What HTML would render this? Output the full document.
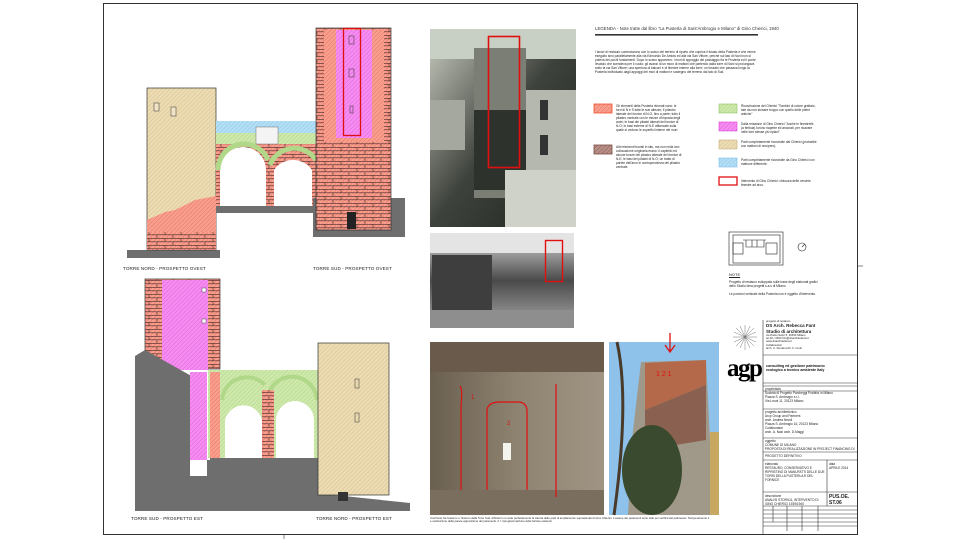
<!DOCTYPE html>
<html><head><meta charset="utf-8"><style>
body{margin:0;width:960px;height:539px;background:#fff;position:relative;overflow:hidden;font-family:"Liberation Sans",sans-serif}
.a{position:absolute}
.t{position:absolute;font-size:3.2px;line-height:4px;color:#222;overflow:hidden}
.lab{position:absolute;font-size:4.6px;color:#222;letter-spacing:.1px}
</style></head><body>
<svg class="a" style="left:0;top:0" width="960" height="539">
<defs>
<pattern id="po" width="3" height="3" patternUnits="userSpaceOnUse" patternTransform="rotate(45)"><rect width="3" height="3" fill="#f7a090"/><line x1="0" y1="0" x2="0" y2="3" stroke="#ee6e5a" stroke-width="1"/></pattern>
<pattern id="pt" width="3" height="3" patternUnits="userSpaceOnUse" patternTransform="rotate(45)"><rect width="3" height="3" fill="#ecdcb4"/><line x1="0" y1="0" x2="0" y2="3" stroke="#d8c08c" stroke-width="1"/></pattern>
<pattern id="pm" width="3" height="3" patternUnits="userSpaceOnUse" patternTransform="rotate(45)"><rect width="3" height="3" fill="#f48ef0"/><line x1="0" y1="0" x2="0" y2="3" stroke="#e85ee0" stroke-width="1"/></pattern>
<pattern id="pg" width="3" height="3" patternUnits="userSpaceOnUse" patternTransform="rotate(45)"><rect width="3" height="3" fill="#cfe8ac"/><line x1="0" y1="0" x2="0" y2="3" stroke="#b0d888" stroke-width="1"/></pattern>
<pattern id="pb" width="3" height="3" patternUnits="userSpaceOnUse" patternTransform="rotate(45)"><rect width="3" height="3" fill="#b4def4"/><line x1="0" y1="0" x2="0" y2="3" stroke="#8ccaee" stroke-width="1"/></pattern>
<pattern id="pr" width="3" height="3" patternUnits="userSpaceOnUse" patternTransform="rotate(45)"><rect width="3" height="3" fill="#b89088"/><line x1="0" y1="0" x2="0" y2="3" stroke="#8a6058" stroke-width="1"/></pattern>
<pattern id="br" width="16" height="7" patternUnits="userSpaceOnUse"><rect width="16" height="7" fill="url(#po)"/><path d="M0 .3H16M0 3.8H16M5 0V3.5M13 3.5V7" stroke="#4a2828" stroke-width=".6" fill="none"/></pattern>
</defs>
<rect x="103.5" y="3.5" width="754" height="531" fill="none" stroke="#333" stroke-width="1"/>
<line x1="284" y1="534" x2="284" y2="539" stroke="#333" stroke-width=".6"/>
<line x1="858" y1="266" x2="863" y2="266" stroke="#333" stroke-width=".6"/>

<!-- TOP LEFT -->
<rect x="127" y="250" width="93" height="8" fill="#6e6e6e"/>
<rect x="147" y="88" width="69" height="162" fill="url(#pt)" stroke="#333" stroke-width=".7"/>
<path d="M147 220 L165 212 L175 210 L195 200 L216 196 L216 250 L147 250Z" fill="url(#po)"/>
<rect x="147" y="232" width="69" height="18" fill="url(#br)"/>
<rect x="154" y="103" width="5" height="8" fill="#f0e4c4" stroke="#333" stroke-width=".5"/>
<rect x="171" y="107" width="5" height="9" fill="#f0e4c4" stroke="#333" stroke-width=".5"/>
<rect x="216" y="121" width="100" height="13" fill="url(#pb)"/>
<rect x="216" y="133" width="100" height="14" fill="url(#pg)"/>
<rect x="216" y="144" width="100" height="62" fill="url(#br)"/>
<path d="M220 206 V170 A23 23 0 0 1 266 170 V206Z M274 206 V170 A23 23 0 0 1 312 170 V206Z" fill="#fff"/>
<path d="M218 170 A26 26 0 0 1 268 160 M270 165 A26 26 0 0 1 316 160" stroke="#b0d888" stroke-width="5" fill="none"/>
<rect x="256" y="127" width="22" height="17" fill="#f4f4f4" stroke="#555" stroke-width=".4"/>
<rect x="216" y="206" width="100" height="7" fill="#6e6e6e"/>
<rect x="313" y="198" width="92" height="39" fill="#6e6e6e"/>
<rect x="316" y="28" width="75" height="202" fill="url(#br)" stroke="#333" stroke-width=".7"/>
<rect x="324" y="30" width="60" height="112" fill="url(#po)"/>
<rect x="336" y="30" width="36" height="108" fill="url(#pm)"/>
<rect x="343.5" y="28.5" width="17" height="107" fill="none" stroke="#e01010" stroke-width="1.3"/>
<rect x="349" y="36" width="5" height="8" fill="none" stroke="#333" stroke-width=".5"/>
<rect x="349" y="69" width="5" height="8" fill="none" stroke="#333" stroke-width=".5"/>
<rect x="350" y="106" width="3" height="7" fill="none" stroke="#333" stroke-width=".5"/>
<rect x="347" y="212" width="9" height="17" fill="#222"/>

<!-- BOTTOM LEFT -->
<rect x="145" y="279" width="75" height="90" fill="url(#br)" stroke="#333" stroke-width=".7"/>
<rect x="162" y="280" width="46" height="90" fill="url(#pm)"/>
<rect x="202" y="288" width="4" height="4" fill="#fff" stroke="#333" stroke-width=".4"/>
<rect x="202" y="319" width="4" height="4" fill="#fff" stroke="#333" stroke-width=".4"/>
<path d="M135 356 L145 350 L195 378 L195 460 L210 460 L210 458 L334 458 L334 495 L410 503 L410 511 L135 511Z" fill="#6e6e6e"/>
<rect x="190" y="372" width="17" height="88" fill="url(#pm)"/>
<rect x="190" y="460" width="17" height="16" fill="#fff"/>
<rect x="208" y="370" width="110" height="88" fill="url(#pg)"/>
<rect x="210" y="372" width="10" height="86" fill="url(#po)"/>
<rect x="262" y="390" width="12" height="68" fill="url(#br)"/>
<path d="M225 458 V420 A19 19 0 0 1 262 420 V458Z M276 458 V420 A19 19 0 0 1 314 420 V458Z" fill="#fff"/>
<path d="M222 400 A25 25 0 0 1 265 385 M270 390 A25 25 0 0 1 317 400" stroke="#b0d888" stroke-width="4" fill="none"/>
<rect x="318" y="343" width="71" height="152" fill="url(#pt)" stroke="#333" stroke-width=".7"/>
<rect x="355" y="379" width="4" height="9" fill="none" stroke="#333" stroke-width=".5"/>
<rect x="355" y="413" width="4" height="9" fill="none" stroke="#333" stroke-width=".5"/>
<rect x="338" y="492" width="10" height="9" fill="#333"/>

<!-- photos -->
<defs>
<linearGradient id="g1" x1="0" y1="0" x2="1" y2="1"><stop offset="0" stop-color="#c8ccc0"/><stop offset=".5" stop-color="#3e423c"/><stop offset="1" stop-color="#1e211c"/></linearGradient>
<linearGradient id="g2" x1="0" y1="0" x2="0" y2="1"><stop offset="0" stop-color="#d8d8d8"/><stop offset=".5" stop-color="#4a4a4a"/><stop offset="1" stop-color="#a8a8a8"/></linearGradient>
<linearGradient id="g3" x1="0" y1="0" x2="1" y2="0"><stop offset="0" stop-color="#6a6050"/><stop offset=".5" stop-color="#8e8270"/><stop offset="1" stop-color="#a09484"/></linearGradient>
</defs>
<rect x="430" y="29" width="146" height="198" fill="url(#g1)"/>
<rect x="430" y="29" width="146" height="30" fill="#c8cfc4"/>
<rect x="474" y="48" width="52" height="150" fill="#7a7e74"/>
<rect x="474" y="110" width="52" height="80" fill="#2e322c"/>
<rect x="526" y="90" width="50" height="85" fill="#b4b8ae"/>
<rect x="540" y="100" width="8" height="20" fill="#333"/><rect x="540" y="135" width="8" height="20" fill="#333"/>
<rect x="430" y="100" width="35" height="50" fill="#a4a89e"/>
<rect x="505" y="170" width="71" height="57" fill="#cfd2c8"/>
<rect x="488.5" y="36.5" width="31" height="131" fill="none" stroke="#e01010" stroke-width="1.6"/>
<rect x="430" y="233" width="144" height="95" fill="url(#g2)"/>
<rect x="430" y="233" width="144" height="20" fill="#e4e4e4"/>
<rect x="432" y="255" width="60" height="55" fill="#3e3e3e"/>
<rect x="430" y="310" width="144" height="18" fill="#8e8e8e"/>
<rect x="545.5" y="240.5" width="17" height="41" fill="none" stroke="#e01010" stroke-width="1.4"/>
<rect x="430" y="342" width="174" height="173" fill="url(#g3)"/>
<rect x="430" y="342" width="174" height="30" fill="#6a5a4c"/>
<rect x="430" y="490" width="174" height="25" fill="#7a6e5e"/>
<rect x="503" y="443" width="8" height="17" fill="#f4f4ee"/>
<path d="M460 386 C463 390 461 400 461 410 V490 M487 490 V410 Q488 402 500 402 H518 Q526 402 527 410 V490 M556 384 V497" stroke="#e01010" stroke-width="1.2" fill="none"/>
<text x="471" y="399" font-size="6" fill="#e01010" font-family="Liberation Sans">1</text>
<text x="507" y="425" font-size="6" fill="#e01010" font-family="Liberation Sans">2</text>
<rect x="609" y="342" width="110" height="173" fill="#8ec2ea"/>
<path d="M641 362 L706 360 L710 440 L713 515 L628 515 L632 440Z" fill="#a09888"/>
<path d="M645 363 L706 360 L706 385 L645 410Z" fill="#b46a4a"/>
<path d="M645 410 L706 385 L706 440 L645 450Z" fill="#8a6050"/>
<ellipse cx="652" cy="470" rx="30" ry="45" fill="#3a4a2e"/>
<path d="M617 342 Q630 400 614 515" stroke="#4a3a2a" stroke-width="3" fill="none"/>
<rect x="710" y="432" width="9" height="83" fill="#c8a860"/>
<text x="656" y="376" font-size="7" fill="#e01010" font-family="Liberation Sans">1 2 1</text>
<path d="M670 333 V351 M665 345 L670 352 L675 345" stroke="#e01010" stroke-width="1.3" fill="none"/>

<!-- legend -->
<rect x="595" y="34" width="163" height="1.6" fill="#333"/>
<rect x="594" y="104" width="18" height="9" fill="url(#po)" stroke="#ee5030" stroke-width=".8"/>
<rect x="594" y="145" width="18" height="9" fill="url(#pr)" stroke="#7a4a40" stroke-width=".8"/>
<rect x="719" y="104" width="18" height="9" fill="url(#pg)" stroke="#90c060" stroke-width=".6"/>
<rect x="719" y="122" width="18" height="9" fill="url(#pm)" stroke="#e040d8" stroke-width=".6"/>
<rect x="719" y="140" width="18" height="9" fill="url(#pt)" stroke="#c8b080" stroke-width=".6"/>
<rect x="719" y="158" width="18" height="9" fill="url(#pb)" stroke="#80c0e8" stroke-width=".6"/>
<rect x="719" y="177" width="18" height="8" fill="#fff" stroke="#e01010" stroke-width="1.3"/>
<g stroke="#222" stroke-width=".6" fill="none">
<rect x="729" y="232" width="54" height="33"/>
<rect x="733" y="235" width="47" height="28"/>
<rect x="733" y="243" width="10" height="11"/><rect x="766" y="243" width="11" height="11"/>
<path d="M743 240 H766 M746 240 V247 H764 V240 M752 240 V247 M757 240 V247"/>
<circle cx="802" cy="247" r="4"/><path d="M802 247 L805 244"/>
</g>
<g stroke="#333" stroke-width=".6" fill="none">
<path d="M763 320 V535 M763 355 H858 M763 383 H858 M763 386 H858 M763 391 H858 M763 409 H858 M763 438 H858 M763 452 H858 M763 460 H858 M763 492 H858 M763 506 H858 M763 510 H858 M763 514 H858 M763 518 H858 M763 522 H858 M763 526 H858 M827 460 V506 M773 506 V522 M787 506 V531 M802 506 V531 M818 506 V531"/>
</g>
<g stroke="#777" stroke-width=".5">
<path d="M745 325 V350 M733 337 H757 M736 328 L754 346 M754 328 L736 346 M740 326 L750 348 M750 326 L740 348 M734 332 L756 342 M734 342 L756 332"/>
</g>
</svg>

<div class="lab" style="left:123px;top:266px">TORRE NORD - PROSPETTO OVEST</div>
<div class="lab" style="left:313px;top:266px">TORRE SUD - PROSPETTO OVEST</div>
<div class="lab" style="left:131px;top:516px">TORRE SUD - PROSPETTO EST</div>
<div class="lab" style="left:316px;top:516px">TORRE NORD - PROSPETTO EST</div>

<div class="a" style="left:595px;top:26px;font-size:4.4px;color:#333">LEGENDA - Note tratte dal libro "La Pusterla di Sant'Ambrogio e Milano" di Gino Chierici, 1940</div>
<div class="t" style="left:595px;top:50px;width:165px;height:36px">I lavori di restauro cominciarono con lo scavo del terreno di riporto che copriva il fusato della Pusterla e che venne eseguito sino parallelamente alla via Edmondo De Amicis ed alla via San Vittore, perché sul lato di Nord non si poteva dei pochi fondamenti. Dopo lo scavo apparvero: i muri di appoggio del passaggio fra le Pusterla ed il ponte levatoio che scendeva per il vuoto; gli avanzi di un muro di mattoni che partendo dalla torre di Nord si prolungava sotto la via San Vittore; una apertura di balconi e di finestre interne alla torre; un fossato che passava lungo la Pusterla individuato dagli appoggi dei muri di mattoni e sostegno del terreno dal lato di Sud.</div>
<div class="t" style="left:616px;top:104px;width:66px;height:34px">Gli elementi della Pusterla ritrovati sono: le torri di N e S tutte le sue altezze; il pilastro laterale del fornice di N-O, fino a parte; tutto il pilastro centrale con le mezze d'imposta degli archi; le basi dei pilastri laterali del fornice di N-O; le basi esterne di N-E affiancate sulla quale si vedono le superfici interne dei muri.</div>
<div class="t" style="left:616px;top:145px;width:66px;height:30px">Altri elementi trovati in situ, ma non nella loro collocazione originaria erano: il capitello ed alcune bozze del pilastro laterale del fornice di N-E; le basi dei pilastri di N-O; un tratto di parete dell'arco in corrispondenza del pilastro centrale.</div>
<div class="t" style="left:741px;top:104px;width:76px">Ricostruzione del Chierici "Tombini di colore grattato, tale da non stonare troppo con quello delle pietre antiche"</div>
<div class="t" style="left:741px;top:122px;width:76px">Dalla relazione di Gino Chierici "Anche le finestrelle (a feritoia) furono riaperte ed ancorati, per ricavare nelle torri stesse più ripiani"</div>
<div class="t" style="left:741px;top:140px;width:76px">Parti completamente ricostruite dal Chierici (probabile con mattoni di recupero).</div>
<div class="t" style="left:741px;top:158px;width:76px">Parti completamente ricostruite da Gino Chierici con mattone differente.</div>
<div class="t" style="left:741px;top:179px;width:76px">Intervento di Gino Chierici: chiusura delle vecchie finestre ad arco.</div>
<div class="a" style="left:729px;top:272px;font-size:4px;text-decoration:underline;color:#222">NOTE</div>
<div class="t" style="left:729px;top:280px;width:90px">Progetto di restauro sviluppato sulle base degli elaborati grafici dello Studio Idea progetti s.a.s di Milano.<br><br>Le porzioni verticale della Pusterla non è oggetto d'intervento.</div>

<div class="t" style="left:766px;top:320px;width:90px;font-size:2.8px;line-height:3.3px">progetto di restauro<br><b style="font-size:4.5px;line-height:5px">DS Arch. Rebecca Fant<br>Studio di architettura</b><br>via Paolo Sarpi 5, 20154 Milano<br>tel 02 / 3493 info@dsarchitettura.it<br>www.dsarchitettura.it<br>Collaboratori<br>arch. C. Donati arch. F. Conti</div>
<div class="a" style="left:727px;top:358px;font-family:'Liberation Serif',serif;font-size:25px;font-weight:bold;line-height:22px;color:#000;letter-spacing:-1.5px">agp</div>
<div class="a" style="left:766px;top:364px;width:75px;font-size:3.6px;line-height:4px;font-weight:bold;color:#111">consulting ed gestione patrimonio ecologico a tecnico ambiente Italy</div>
<div class="t" style="left:765px;top:387px;width:92px">proprietario<br>Società di Progetto Parcheggi Pubblici in Milano<br>Piazza S. Ambrogio s.r.l.<br>Via Leoni 11, 20123 Milano</div>
<div class="t" style="left:765px;top:410px;width:92px">progetto architettonico<br>Arcp Group and Partners<br>arch. Andrea Nezdi<br>Piazza S. Ambrogio 16, 20123 Milano<br>Collaboratori<br>arch. A. Nazi arch. D.Maggi</div>
<div class="t" style="left:765px;top:439px;width:92px;height:12px">oggetto<br>COMUNE DI MILANO<br>PROPOSTA DI REALIZZAZIONE IN PROJECT FINANCING DI AUTORIMESSA INTERRATA PER RESIDENTI IN PIAZZA S.AMBROGIO</div>
<div class="t" style="left:765px;top:454px;width:60px">PROGETTO DEFINITIVO</div>
<div class="t" style="left:765px;top:462px;width:60px">elaborato<br>RESTAURO, CONSERVATIVO E RIPRISTINO DI MANUFATTI DELLE DUE TORRI DELLA PUSTERLA E DEL FORNICE</div>
<div class="t" style="left:829px;top:462px;width:28px">data<br>APRILE 2014</div>
<div class="t" style="left:765px;top:494px;width:60px">descrizione<br>ANALISI STORICA, INTERVENTO DI GINO CHIERICI 1939/1940</div>
<div class="a" style="left:829px;top:494px;font-size:5px;font-weight:bold;line-height:6px;color:#222">PUS.OE.<br>ST.06</div>
<div class="t" style="left:430px;top:517px;width:280px;font-size:2.8px;line-height:3.4px">Confronto fra l'esterno e l'interno della Torre Sud. All'interno si vede perfettamente la traccia delle parti di ampliamento sopraelevati di Gino Chierici. L'esame dei paramenti sono stati per verifica del palinsesto. Tamponamento 1 e sostituzione della parete apposizione dei paramenti, 2 = riprogrammazione delle feritoie esistenti.</div>
</body></html>
